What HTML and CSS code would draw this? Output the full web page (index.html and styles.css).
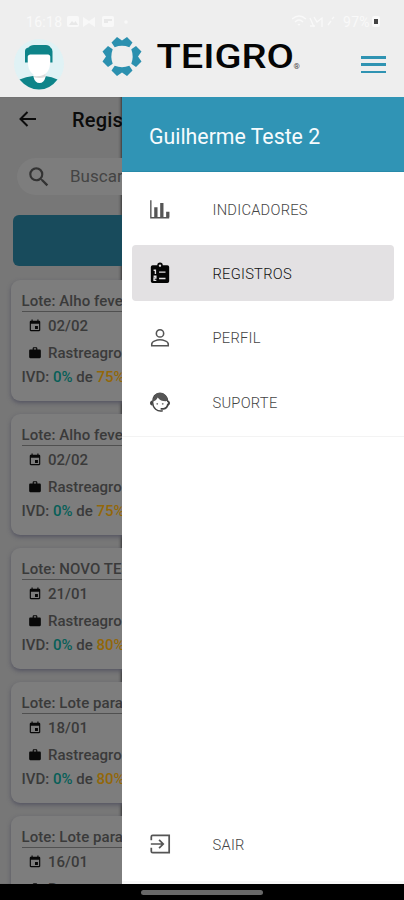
FILE: index.html
```
<!DOCTYPE html>
<html lang="pt-BR">
<head>
<meta charset="utf-8">
<title>Teigro</title>
<link rel="stylesheet" href="styles.css">
</head>
<body>
<svg width="0" height="0" class="defs">
  <symbol id="cal" viewBox="0 0 24 24"><path d="M17 12h-5v5h5v-5zM16 1v2H8V1H6v2H5c-1.100 0-2 .9-2 2v14c0 1.100.9 2 2 2h14c1.100 0 2-.9 2-2V5c0-1.100-.9-2-2-2h-1V1h-2zm3 18H5V8h14v11z"/></symbol>
  <symbol id="bag" viewBox="0 0 24 24"><path d="M20 6h-4V4c0-1.100-.9-2-2-2h-4c-1.100 0-2 .9-2 2v2H4c-1.100 0-2 .9-2 2v11c0 1.100.9 2 2 2h16c1.100 0 2-.9 2-2V8c0-1.100-.9-2-2-2zm-6 0h-4V4h4v2z"/></symbol>
</svg>
<header class="top">
  <div class="status">
    <span class="clock">16:18</span>
    <svg class="st-left" width="66" height="14" viewBox="0 0 66 14">
      <rect x="1" y="1" width="12" height="11" rx="2"/><path class="cut" d="M3 10l3-4 2 2 1.500-2 2.500 4z"/>
      <path d="M17 2l6 4 6-4v10l-6-4-6 4z"/>
      <rect x="36" y="1" width="12" height="11" rx="2"/><path class="cut" d="M38 4h8v2h-4v2h-4z"/>
      <circle cx="60" cy="7" r="1.800"/>
    </svg>
    <svg class="st-right" width="48" height="14" viewBox="0 0 48 14">
      <path d="M0 4q7-6 14 0M3 7q4-4 8 0M6 10q1-1 2 0M18 3l4 9M22 2l3 5 5-4v9M18 11h5M36 10l3-4M40 4l2-2"/>
    </svg>
    <span class="pct">97%</span>
    <span class="bat"></span>
  </div>
  <div class="brandbar">
    <svg class="avatar" width="50" height="52" viewBox="0 0 50 52">
      <circle cx="25" cy="25" r="25" fill="#e0f2f5"/>
      <path d="M5.500 40.500Q12 37.500 19 37h12q7 .5 12.500 3.500Q36 50.500 25 50.500T5.500 40.500z" fill="#0e8489"/>
      <path d="M19.500 32h12v6q-1.500 6-6 6t-6-6z" fill="#fff"/>
      <path d="M20 37q7 1 11.500-4v5q-5 1.500-11 .5z" fill="#dcdcdc"/>
      <path d="M14 14h22v10c0 8-5 13-11 13s-11-5-11-13z" fill="#fff"/>
      <path d="M11 23.500V12q0-3 3.500-3.500Q16 6 20 6h12q3.500 0 4.500 2.500 2 1 2 4v11h-2.200v-6q-.3-1.500-2-2H16q-2 .5-2.300 2v6z" fill="#0e8489"/>
    </svg>
    <svg class="logo" width="200" height="44" viewBox="0 0 200 44">
      <g fill="#2b90af">
        <path d="M9.500 8.500L15 3l5 3.500L25 3l5.500 5.500-3.200 4.700Q20 10.500 12.700 13.200z"/>
        <path d="M9.500 8.500L15 3l5 3.500L25 3l5.500 5.500-3.200 4.700Q20 10.500 12.700 13.200z" transform="rotate(90 20 22.500)"/>
        <path d="M9.500 8.500L15 3l5 3.500L25 3l5.500 5.500-3.200 4.700Q20 10.500 12.700 13.200z" transform="rotate(180 20 22.500)"/>
        <path d="M9.500 8.500L15 3l5 3.500L25 3l5.500 5.500-3.200 4.700Q20 10.500 12.700 13.200z" transform="rotate(270 20 22.500)"/>
      </g>
      <text class="word" x="54.500" y="33.700" textLength="137.500" lengthAdjust="spacingAndGlyphs">TEIGRO</text>
      <text class="reg" x="191.500" y="34.500">®</text>
    </svg>
    <span class="burger"><i></i><i></i><i></i></span>
  </div>
</header>
<main class="stage">
  <section class="page">
    <div class="title">
      <svg width="24" height="24" viewBox="0 0 24 24"><path d="M20 12H5M11.500 5L4.500 12l7 7" fill="none" stroke="#0c0c0c" stroke-width="2"/></svg>
      <h1>Registros</h1>
    </div>
    <div class="search">
      <svg width="26" height="26" viewBox="0 0 24 24"><path fill="#333" d="M15.500 14h-.79l-.28-.27A6.471 6.471 0 0 0 16 9.500 6.500 6.500 0 1 0 9.500 16c1.610 0 3.090-.59 4.230-1.570l.27.28v.79l5 4.990L20.490 19l-4.990-5zm-6 0C7.010 14 5 11.990 5 9.500S7.010 5 9.500 5 14 7.010 14 9.500 11.990 14 9.500 14z"/></svg>
      <span>Buscar</span>
    </div>
    <div class="action"></div>
    <div class="cards">
      <article class="card"><h2>Lote: Alho fevereiro</h2><p class="row"><svg><use href="#cal"/></svg>02/02</p><p class="row farm"><svg><use href="#bag"/></svg>Rastreagro</p><p class="ivd">IVD: <b>0%</b> de <em>75%</em></p></article>
      <article class="card"><h2>Lote: Alho fevereiro</h2><p class="row"><svg><use href="#cal"/></svg>02/02</p><p class="row farm"><svg><use href="#bag"/></svg>Rastreagro</p><p class="ivd">IVD: <b>0%</b> de <em>75%</em></p></article>
      <article class="card"><h2>Lote: NOVO TESTE</h2><p class="row"><svg><use href="#cal"/></svg>21/01</p><p class="row farm"><svg><use href="#bag"/></svg>Rastreagro</p><p class="ivd">IVD: <b>0%</b> de <em>80%</em></p></article>
      <article class="card"><h2>Lote: Lote para</h2><p class="row"><svg><use href="#cal"/></svg>18/01</p><p class="row farm"><svg><use href="#bag"/></svg>Rastreagro</p><p class="ivd">IVD: <b>0%</b> de <em>80%</em></p></article>
      <article class="card"><h2>Lote: Lote para</h2><p class="row"><svg><use href="#cal"/></svg>16/01</p><p class="row farm"><svg><use href="#bag"/></svg>Rastreagro</p></article>
    </div>
  </section>
  <aside class="drawer">
    <div class="user">Guilherme Teste 2</div>
    <nav class="menu">
      <a class="item"><svg viewBox="0 0 24 24" fill="none" stroke="#555"><path d="M2 2.500v19h20" stroke-width="1.500"/><path d="M7.500 21v-11M14 21V5.500M20.500 21v-6" stroke-width="3.600"/></svg>INDICADORES</a>
      <a class="item on"><svg viewBox="0 0 24 24"><path fill="#050505" d="M4 3.500h5a3 3 0 0 1 6 0h5q2 0 2 2V21q0 2-2 2H4q-2 0-2-2V5.500q0-2 2-2z"/><circle cx="12" cy="4" r="1.300" fill="#e3e1e3"/><path d="M5 9h2v4M5 15.500h2.500v2H5.500V20H8M11 11h7M11 18h7" fill="none" stroke="#e3e1e3" stroke-width="1.500"/></svg>REGISTROS</a>
      <a class="item"><svg viewBox="0 0 24 24" fill="none" stroke="#555" stroke-width="1.700"><circle cx="12" cy="7" r="4"/><path d="M3 20.500v-2c0-3 6-4.500 9-4.500s9 1.500 9 4.500v2z"/></svg>PERFIL</a>
      <a class="item"><svg viewBox="0 0 24 24"><path d="M15 21.500c-6 1.500-11-3-11-9C4 6 7.500 3 12 3s8.500 3 8.500 9" fill="none" stroke="#444" stroke-width="1.500"/><path d="M4 11.500C6.500 11 8.500 9.500 9.500 7c2.500 3.500 6 4.500 11 4C20 5 16 1.500 12 1.500S5 5 4 11.500z" fill="#555"/><path d="M3.500 10q-2.500 1-2.500 3.200t2.500 3zM20.500 10q2.500 1 2.500 3.200t-2.500 3z" fill="#444"/><path d="M20.700 14q-.7 5-5 5.500h-3" fill="none" stroke="#444" stroke-width="2"/><circle cx="9" cy="14" r="1" fill="#777"/><circle cx="15" cy="14" r="1" fill="#777"/></svg>SUPORTE</a>
    </nav>
    <div class="exit">
      <a class="item"><svg viewBox="0 0 24 24" fill="none" stroke="#555" stroke-width="1.900"><path d="M2.500 8V4q0-1.500 1.500-1.500h18v19H4Q2.500 21.500 2.500 20v-4M2 12h13M11 7.500l4.500 4.500-4.500 4.500"/></svg>SAIR</a>
    </div>
  </aside>
</main>
<footer class="home"><span></span></footer>
</body>
</html>
```
FILE: styles.css
```
* { box-sizing: border-box; }
body { margin: 0; width: 404px; height: 900px; overflow: hidden; display: flex; flex-direction: column; font-family: Roboto, sans-serif; background: #000; }
h1, h2, p { margin: 0; }
svg { flex: none; display: block; }
.defs { display: none; }

.top { height: 97px; flex: none; background: #eee; overflow: hidden; }
.status { height: 34px; padding: 9px 26px 0 26px; display: flex; align-items: center; color: #f9f9f9; fill: #f8f8f8; font-size: 14px; letter-spacing: .3px; }
.clock { width: 40px; }
.cut { fill: #e8e8e8; }
.st-right { margin-left: auto; fill: none; stroke: #f9f9f9; stroke-width: 1.300; }
.pct { margin-left: 3px; width: 29px; font-size: 14px; }
.bat { width: 8px; height: 11px; margin-right: -2px; border-radius: 2px; border: solid #fafafa; border-width: 3px 2px; background: #444; }
.brandbar { height: 63px; padding: 4px 18px 0 14px; display: flex; align-items: flex-start; }
.avatar { margin-top: 1px; }
.logo { margin: -4px 0 0 38px; }
.word { font: 500 33.300px Roboto, sans-serif; fill: #050505; }
.reg { font: 8px Roboto, sans-serif; fill: #444; }
.burger { margin: 18px 0 0 auto; width: 25px; height: 17px; display: flex; flex-direction: column; justify-content: space-between; }
.burger i { height: 2.500px; background: #2f93b2; }

.stage { height: 787px; flex: none; display: grid; grid-template-columns: 122px 282px; }
.page { overflow: hidden; background: #777; height: 787px; box-shadow: inset -3px 0 3px -2px #333; }
.title { height: 46px; padding-left: 16px; display: flex; align-items: center; gap: 32px; }
.title h1 { font-size: 20px; font-weight: 500; color: #0b0b0b; letter-spacing: .2px; }
.title svg { margin-top: -2px; }
.search { margin: 15px 0 0 17px; width: 370px; height: 37px; border-radius: 19px; background: #7d7d7d; padding-left: 9px; display: flex; align-items: center; gap: 18px; font-size: 17px; color: #444; }
.search span { margin-top: -1px; }
.action { margin: 20px 0 0 13px; width: 378px; height: 51px; border-radius: 6px; background: #184b5c; }
.cards { margin: 14px 0 0 11px; width: 382px; display: flex; flex-direction: column; gap: 13px; }
.card { height: 121px; flex: none; padding: 11px 10px 0 10.500px; border-radius: 9px; background: #7d7d7d; box-shadow: 0 2px 4px #555562; color: #3a3a3a; font-size: 15px; line-height: 20px; font-weight: 500; }
.card h2 { height: 21px; font-size: 15px; font-weight: 500; line-height: 20px; letter-spacing: .08px; border-bottom: 1px solid #505050; white-space: nowrap; }
.row { display: flex; align-items: center; gap: 6.500px; padding-left: 6px; margin-top: 4px; height: 20px; }
.row svg { width: 14px; height: 14px; fill: #080808; }
.farm { margin-top: 7px; }
.ivd { margin-top: 4px; }
.ivd b { color: #075f58; font-weight: 500; }
.ivd em { color: #936708; font-style: normal; }

.drawer { background: #fff; display: flex; flex-direction: column; }
.user { height: 75px; padding: 4px 0 0 27px; display: flex; align-items: center; background: #3094b5; color: #f6fbfd; font-size: 21.300px; border-bottom: 1px solid #278aa9; }
.menu { height: 265px; padding: 9px 10px 0; display: flex; flex-direction: column; gap: 8.400px; border-bottom: 1px solid #f3f3f3; }
.item { height: 56px; flex: none; padding: 1px 0 0 17px; display: flex; align-items: center; gap: 41.500px; border-radius: 4px; font-size: 14.700px; font-weight: 300; letter-spacing: .25px; color: #444; }
.item svg { width: 22px; height: 22px; margin-top: -1px; }
.on { background: #e3e1e3; color: #111; }
.exit { margin-top: auto; height: 72px; padding: 4px 10px 0; border-bottom: 3px solid #f7f7f7; }
.home { height: 16px; flex: none; display: flex; justify-content: center; align-items: center; background: #000; }
.home span { width: 122px; height: 5px; border-radius: 3px; background: #686868; }
```
